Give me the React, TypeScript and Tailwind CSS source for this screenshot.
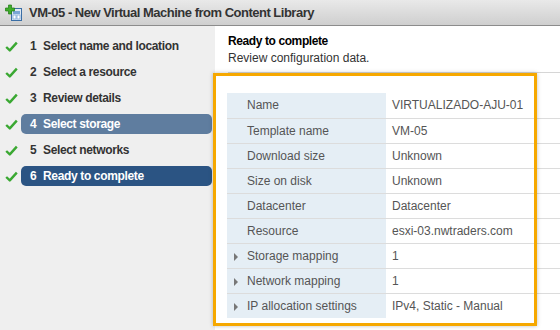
import React from 'react'

const steps = [
    { n: 1, label: 'Select name and location' },
    { n: 2, label: 'Select a resource' },
    { n: 3, label: 'Review details' },
    { n: 4, label: 'Select storage', state: 'visited' },
    { n: 5, label: 'Select networks' },
    { n: 6, label: 'Ready to complete', state: 'current' },
]

const rows = [
    { label: 'Name', value: 'VIRTUALIZADO-AJU-01' },
    { label: 'Template name', value: 'VM-05' },
    { label: 'Download size', value: 'Unknown' },
    { label: 'Size on disk', value: 'Unknown' },
    { label: 'Datacenter', value: 'Datacenter' },
    { label: 'Resource', value: 'esxi-03.nwtraders.com' },
    { label: 'Storage mapping', value: '1', expand: true },
    { label: 'Network mapping', value: '1', expand: true },
    { label: 'IP allocation settings', value: 'IPv4, Static - Manual', expand: true },
]

const VmIcon = () => (
    <svg width="18" height="18" viewBox="0 0 18 18">
        <rect x="6.5" y="4.5" width="10" height="12" fill="#dfe9f3" stroke="#3a6ea5" />
        <rect x="8" y="7" width="7" height="3" fill="#7aa6d6" />
        <rect x="8" y="11" width="3" height="4" fill="#ffffff" stroke="#7aa6d6" strokeWidth="0.8" />
        <rect x="12" y="11" width="3" height="4" fill="#ffffff" stroke="#7aa6d6" strokeWidth="0.8" />
        <path d="M3.5 1h3v3h3v3h-3v3h-3v-3h-3v-3h3z" fill="#3fae2a" stroke="#1f7a15" strokeWidth="0.7" />
    </svg>
)

const Check = () => (
    <svg width="13" height="11" viewBox="0 0 13 11">
        <path d="M1.2 6l3.6 3.4L11.8 1.6" fill="none" stroke="#3aa832" strokeWidth="2.4" strokeLinejoin="round" />
    </svg>
)

const App: React.FC = () => {
    return (
        <div
            className="relative w-[560px] h-[330px] overflow-hidden bg-white text-[12px] text-[#333]"
            style={{ fontFamily: '"Liberation Sans", Arial, sans-serif' }}
        >
            <header className="h-[26px] flex items-center gap-[6px] pl-[5px] bg-gradient-to-b from-[#e9e9e9] to-[#cfcfcf] border-b border-[#8c8c8c]">
                <VmIcon />
                <span className="text-[13px] font-bold text-[#333] tracking-[-0.5px]">
                    VM-05 - New Virtual Machine from Content Library
                </span>
            </header>
            <div className="flex h-[304px]">
                <aside className="w-[216px] bg-[#efefef] pt-[7px]">
                    {steps.map((s) => (
                        <div key={s.n} className="h-[26px] flex items-center pl-[5px]">
                            <Check />
                            <div
                                className={
                                    'ml-[3px] flex-1 h-[20px] flex items-center pl-[9px] mr-[3px] rounded-[5px] font-bold tracking-[-0.35px] ' +
                                    (s.state === 'current'
                                        ? 'bg-[#2b5483] text-white'
                                        : s.state === 'visited'
                                        ? 'bg-[#5f7d9f] text-white'
                                        : 'text-[#333]')
                                }
                            >
                                <span className="w-[13px]">{s.n}</span>
                                <span>{s.label}</span>
                            </div>
                        </div>
                    ))}
                </aside>
                <main className="flex-1 bg-white pt-[8px] pl-[13px]">
                    <div className="font-bold text-black tracking-[-0.4px] leading-[15px]">Ready to complete</div>
                    <div className="mt-[2px] leading-[15px] text-[#333]">Review configuration data.</div>
                    <div className="mt-[6px] border-t border-[#d6d6d6]" />
                    <table className="mt-[20px] -ml-[1px] w-[333px] border-collapse text-[#555]">
                        <tbody>
                            {rows.map((r) => (
                                <tr key={r.label} className="h-[25px] border-t border-[#dcdcdc] first:border-t-0">
                                    <td className="w-[159px] bg-[#e5eef5] pl-[20px] relative">
                                        {r.expand && (
                                            <span className="absolute left-[7px] top-[9px] w-0 h-0 border-y-[4px] border-y-transparent border-l-[4px] border-l-[#777]" />
                                        )}
                                        {r.label}
                                    </td>
                                    <td className="pl-[6px]">{r.value}</td>
                                </tr>
                            ))}
                        </tbody>
                    </table>
                </main>
            </div>
            <div className="absolute left-[213px] top-[73px] w-[324px] h-[253px] border-[3px] border-[#f6a800] shadow-[0_0_4px_rgba(0,0,0,0.25)]" />
        </div>
    )
}

export default App
